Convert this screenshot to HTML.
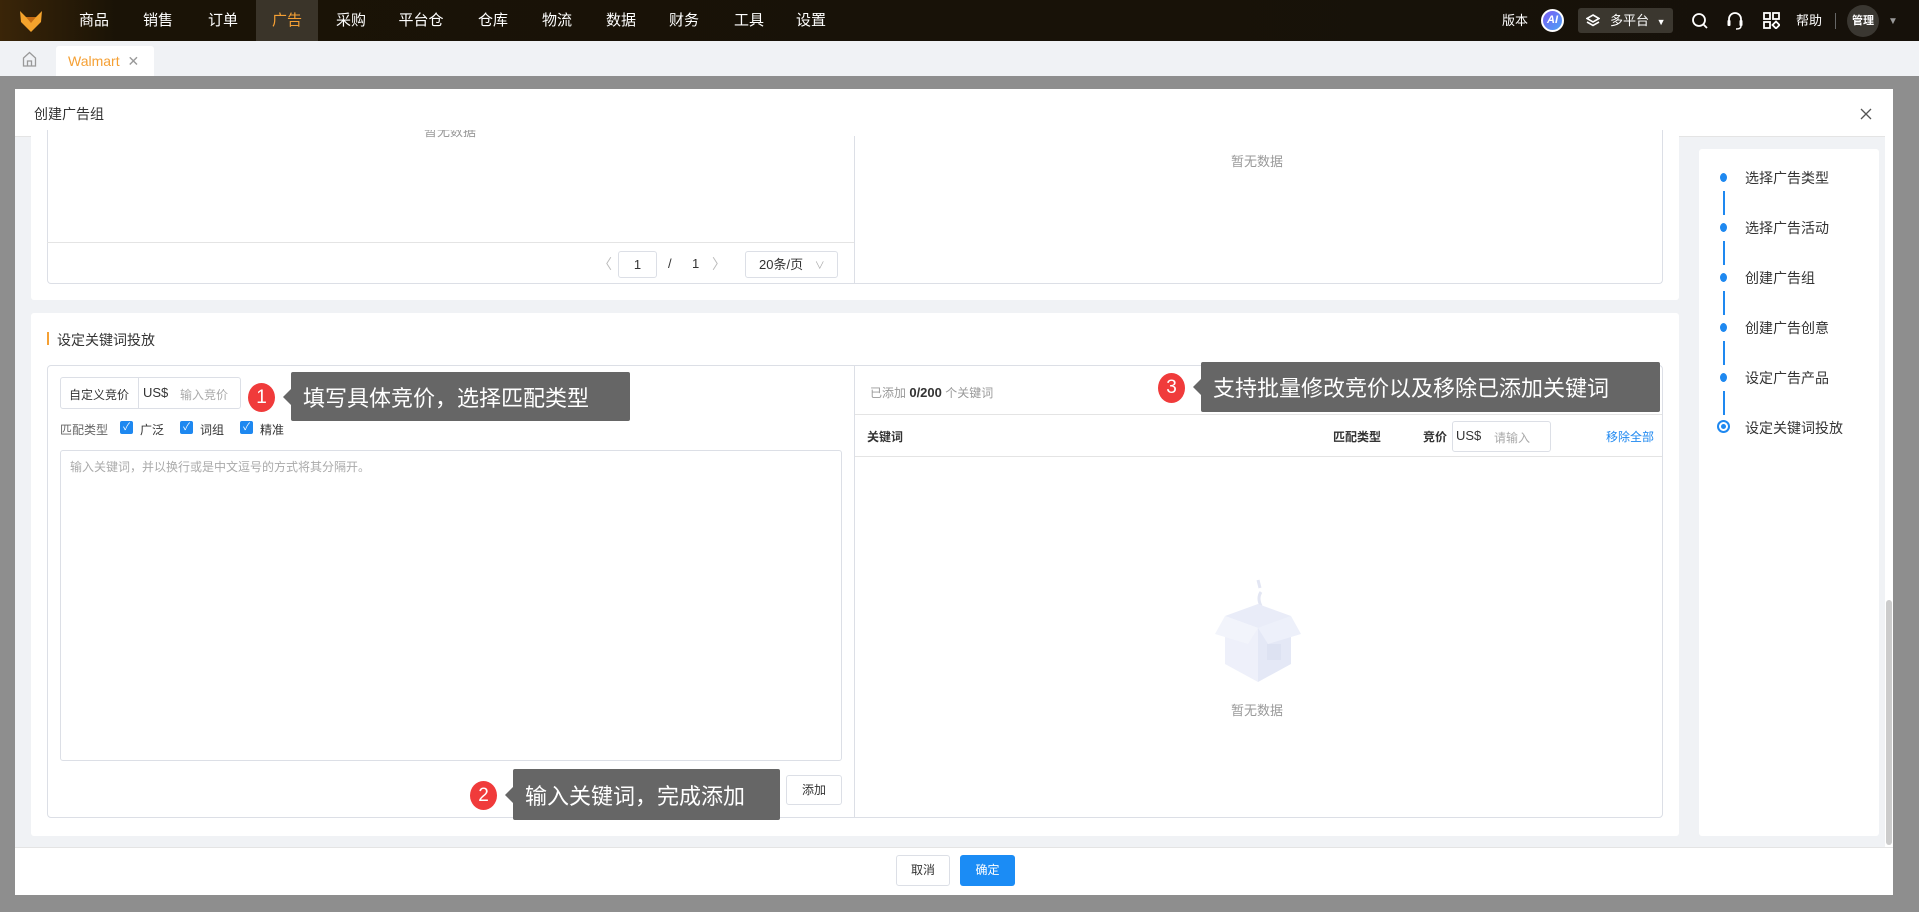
<!DOCTYPE html>
<html><head><meta charset="utf-8"><style>
*{margin:0;padding:0;box-sizing:border-box}
body{width:1919px;height:912px;overflow:hidden;position:relative;font-family:"Liberation Sans","Noto Sans CJK SC",sans-serif;background:#8e8e8e;color:#333}
.a{position:absolute}
.nav{left:0;top:0;width:1919px;height:41px;background:linear-gradient(90deg,#3a2508 0,#1a1306 6%,#16110a 100%)}
.ni{position:absolute;top:0;height:41px;line-height:41px;color:#fff;font-size:15px;transform:translateX(-50%)}
.tabs{left:0;top:41px;width:1919px;height:35px;background:#f0f2f5}
.modal{left:15px;top:89px;width:1878px;height:806px;background:#fff}
.body{left:15px;top:136px;width:1870px;height:711px;background:#f0f2f5;border-top:1px solid #e4e4e4}
.card{background:#fff;border-radius:3px}
.bd{border:1px solid #dcdfe6}
.g{color:#999}
.f13{font-size:13px}
.tip{background:#666;color:#fff;font-size:22px;border-radius:2px;display:flex;align-items:center;padding-left:12px}
.tip:before{content:"";position:absolute;left:-8px;top:50%;margin-top:-8px;border:8px solid transparent;border-left:0;border-right-color:#666}
.num{background:#f03b3b;color:#fff;border-radius:50%;text-align:center;font-size:19px}
.cb{width:13px;height:13px;background:#1e88f0;border-radius:2px;color:#fff;font-size:10px;line-height:13px;text-align:center}
.dot{width:7px;height:9px;border-radius:50%;background:#1e88f0}
.vl{width:2px;height:24px;background:#1e88f0}
.st{font-size:14px;color:#333}
</style></head><body>
<div class="a nav">
<svg class="a" style="left:19px;top:9px" width="24" height="24" viewBox="0 0 24 24"><path d="M1 2 L7 8 L17 8 L23 2 L22 13 L12 23 L2 13Z" fill="#f4a32c"/><path d="M7 8 L12 14 L17 8" fill="#c56b12"/></svg>
<div class="a" style="left:256px;top:0;width:62px;height:41px;background:#3a3429"></div>
<div class="ni" style="left:94px">商品</div><div class="ni" style="left:158px">销售</div><div class="ni" style="left:223px">订单</div><div class="ni" style="left:287px;color:#f5a034">广告</div><div class="ni" style="left:351px">采购</div><div class="ni" style="left:421px">平台仓</div><div class="ni" style="left:493px">仓库</div><div class="ni" style="left:557px">物流</div><div class="ni" style="left:621px">数据</div><div class="ni" style="left:684px">财务</div><div class="ni" style="left:749px">工具</div><div class="ni" style="left:811px">设置</div>
<div class="ni" style="left:1515px;font-size:13px">版本</div>
<div class="a" style="left:1541px;top:9px;width:23px;height:23px;border-radius:50%;background:linear-gradient(135deg,#7b5cf5,#4aa3f5);border:2px solid #fff;color:#fff;font-size:11px;font-weight:bold;text-align:center;line-height:19px;font-style:italic">AI</div>
<div class="a" style="left:1578px;top:8px;width:95px;height:25px;background:#3b372f;border-radius:3px;color:#fff;font-size:13px;line-height:25px;padding-left:32px">多平台 <span style="font-size:9px;margin-left:4px">▼</span></div>
<svg class="a" style="left:1586px;top:14px" width="14" height="13" viewBox="0 0 14 13"><path d="M7 1 L13 4.5 L7 8 L1 4.5Z M1 8 L7 11.5 L13 8" fill="none" stroke="#fff" stroke-width="1.6"/></svg>
<svg class="a" style="left:1691px;top:12px" width="18" height="18" viewBox="0 0 18 18"><circle cx="8" cy="8" r="6" fill="none" stroke="#fff" stroke-width="1.8"/><path d="M12.5 12.5 L16 16" stroke="#fff" stroke-width="1.8"/></svg>
<svg class="a" style="left:1726px;top:11px" width="18" height="20" viewBox="0 0 18 20"><path d="M3 11 V8 a6 6 0 0 1 12 0 V11" fill="none" stroke="#fff" stroke-width="1.8"/><rect x="1.5" y="9" width="3" height="6" rx="1" fill="#fff"/><rect x="13.5" y="9" width="3" height="6" rx="1" fill="#fff"/><path d="M15 15 q0 3 -5 3" fill="none" stroke="#fff" stroke-width="1.5"/></svg>
<svg class="a" style="left:1763px;top:12px" width="17" height="17" viewBox="0 0 17 17" fill="none" stroke="#fff" stroke-width="1.8"><rect x="1" y="1" width="6" height="6"/><rect x="10" y="1" width="6" height="6"/><rect x="1" y="10" width="6" height="6"/><path d="M13 9.5 L16.5 13 L13 16.5 L9.5 13Z"/></svg>
<div class="ni" style="left:1809px;font-size:13px">帮助</div>
<div class="a" style="left:1835px;top:13px;width:1px;height:16px;background:#666"></div>
<div class="a" style="left:1847px;top:5px;width:32px;height:32px;border-radius:50%;background:#3a3731;color:#fff;font-size:11px;line-height:32px;text-align:center;font-weight:bold">管理</div>
<div class="a" style="left:1888px;top:16px;color:#999;font-size:10px">▼</div>
</div>
<div class="a tabs">
<svg class="a" style="left:22px;top:10px" width="15" height="16" viewBox="0 0 15 16"><path d="M1.5 7 L7.5 1.5 L13.5 7 V15 H1.5Z M5.5 15 V10 H9.5 V15" fill="none" stroke="#999" stroke-width="1.3"/></svg>
<div class="a" style="left:56px;top:5px;width:98px;height:30px;background:#fff;border-radius:3px 3px 0 0"></div>
<div class="a" style="left:68px;top:12px;font-size:14px;color:#f5a034">Walmart <span style="color:#999;margin-left:4px">✕</span></div>
</div>
<div class="a modal"></div>
<div class="a" style="left:34px;top:104px;font-size:14px;color:#333">创建广告组</div>
<svg class="a" style="left:1860px;top:108px" width="12" height="12" viewBox="0 0 12 12"><path d="M1 1 L11 11 M11 1 L1 11" stroke="#555" stroke-width="1.3"/></svg>
<div class="a body"></div>
<!-- top card -->
<div class="a card" style="left:31px;top:136px;width:1648px;height:164px;border-radius:0 0 3px 3px"></div>
<div class="a bd" style="left:47px;top:130px;width:1616px;height:154px;border-top:0;border-radius:0 0 4px 4px"></div>
<div class="a" style="left:854px;top:136px;width:1px;height:148px;background:#dcdfe6"></div>
<div class="a" style="left:47px;top:242px;width:807px;height:1px;background:#e4e4e4"></div>
<div class="a g f13" style="left:424px;top:130px;height:12px;overflow:hidden;line-height:4px">暂无数据</div>
<div class="a g f13" style="left:1231px;top:151px">暂无数据</div>
<div class="a" style="left:598px;top:254px;color:#bbb;font-size:14px">〈</div>
<div class="a bd" style="left:618px;top:251px;width:39px;height:27px;border-radius:3px;font-size:13px;text-align:center;line-height:25px">1</div>
<div class="a f13" style="left:668px;top:256px">/</div>
<div class="a f13" style="left:692px;top:256px">1</div>
<div class="a" style="left:712px;top:254px;color:#bbb;font-size:14px">〉</div>
<div class="a bd" style="left:745px;top:251px;width:93px;height:27px;border-radius:3px;font-size:13px;line-height:25px;padding-left:13px">20条/页 <span style="color:#aaa;font-size:10px;margin-left:8px">∨</span></div>
<!-- steps -->
<div class="a card" style="left:1699px;top:149px;width:180px;height:687px"></div>
<div class="a dot" style="left:1720px;top:173px"></div><div class="a st" style="left:1745px;top:168px">选择广告类型</div>
<div class="a vl" style="left:1723px;top:191px"></div>
<div class="a dot" style="left:1720px;top:223px"></div><div class="a st" style="left:1745px;top:218px">选择广告活动</div>
<div class="a vl" style="left:1723px;top:241px"></div>
<div class="a dot" style="left:1720px;top:273px"></div><div class="a st" style="left:1745px;top:268px">创建广告组</div>
<div class="a vl" style="left:1723px;top:291px"></div>
<div class="a dot" style="left:1720px;top:323px"></div><div class="a st" style="left:1745px;top:318px">创建广告创意</div>
<div class="a vl" style="left:1723px;top:341px"></div>
<div class="a dot" style="left:1720px;top:373px"></div><div class="a st" style="left:1745px;top:368px">设定广告产品</div>
<div class="a vl" style="left:1723px;top:391px"></div>
<div class="a" style="left:1717px;top:420px;width:13px;height:13px;border-radius:50%;border:2px solid #1e88f0;background:#fff"><div style="margin:2px;width:5px;height:5px;border-radius:50%;background:#1e88f0"></div></div>
<div class="a st" style="left:1745px;top:418px">设定关键词投放</div>
<!-- second card -->
<div class="a card" style="left:31px;top:313px;width:1648px;height:523px"></div>
<div class="a" style="left:47px;top:332px;width:2px;height:13px;background:#f5a034"></div>
<div class="a" style="left:57px;top:330px;font-size:14px;color:#333">设定关键词投放</div>
<div class="a bd" style="left:47px;top:365px;width:1616px;height:453px;border-radius:4px"></div>
<div class="a" style="left:854px;top:365px;width:1px;height:453px;background:#dcdfe6"></div>
<div class="a bd" style="left:60px;top:377px;width:181px;height:32px;border-radius:3px"></div>
<div class="a" style="left:138px;top:377px;width:1px;height:32px;background:#dcdfe6"></div>
<div class="a" style="left:69px;top:386px;font-size:12px">自定义竞价</div>
<div class="a" style="left:143px;top:385px;font-size:13px">US$</div>
<div class="a" style="left:180px;top:386px;font-size:12px;color:#aaa">输入竞价</div>
<div class="a" style="left:60px;top:421px;font-size:12px;color:#666">匹配类型</div>
<div class="a cb" style="left:120px;top:421px">✓</div><div class="a" style="left:140px;top:421px;font-size:12px">广泛</div>
<div class="a cb" style="left:180px;top:421px">✓</div><div class="a" style="left:200px;top:421px;font-size:12px">词组</div>
<div class="a cb" style="left:240px;top:421px">✓</div><div class="a" style="left:260px;top:421px;font-size:12px">精准</div>
<div class="a bd" style="left:60px;top:450px;width:782px;height:311px;border-radius:3px"></div>
<div class="a" style="left:70px;top:458px;font-size:12px;color:#aaa">输入关键词，并以换行或是中文逗号的方式将其分隔开。</div>
<div class="a bd" style="left:786px;top:775px;width:56px;height:30px;border-radius:3px;font-size:12px;text-align:center;line-height:28px">添加</div>
<div class="a" style="left:870px;top:384px;font-size:12px;color:#999">已添加 <b style="color:#333;font-size:13px">0/200</b> 个关键词</div>
<div class="a" style="left:855px;top:414px;width:807px;height:1px;background:#e4e4e4"></div>
<div class="a" style="left:867px;top:428px;font-size:12px;font-weight:bold">关键词</div>
<div class="a" style="left:1333px;top:428px;font-size:12px;font-weight:bold">匹配类型</div>
<div class="a" style="left:1423px;top:428px;font-size:12px;font-weight:bold">竞价</div>
<div class="a bd" style="left:1452px;top:421px;width:99px;height:31px;border-radius:3px"></div>
<div class="a" style="left:1456px;top:428px;font-size:13px">US$</div>
<div class="a" style="left:1494px;top:429px;font-size:12px;color:#aaa">请输入</div>
<div class="a" style="left:1606px;top:428px;font-size:12px;color:#1e88f0">移除全部</div>
<div class="a" style="left:855px;top:456px;width:807px;height:1px;background:#e4e4e4"></div>
<svg class="a" style="left:1203px;top:578px" width="110" height="108" viewBox="0 0 110 108"><path d="M55 2 l2 8 M58 14 q-4 6 0 14" stroke="#e3e6f3" stroke-width="3" fill="none"/><path d="M22 38 L55 26 L88 38 L55 50Z" fill="#e9ecf8"/><path d="M22 38 L55 50 L55 104 L22 86Z" fill="#eef0fa"/><path d="M88 38 L55 50 L55 104 L88 86Z" fill="#e4e8f6"/><path d="M22 38 L12 56 L45 66 L55 50Z" fill="#f2f4fb"/><path d="M88 38 L98 56 L65 66 L55 50Z" fill="#edf0fa"/><rect x="64" y="66" width="14" height="16" fill="#dde2f2"/></svg>
<div class="a g f13" style="left:1231px;top:700px">暂无数据</div>
<!-- tips -->
<div class="a num" style="left:248px;top:383px;width:27px;height:29px;line-height:29px">1</div>
<div class="a tip" style="left:291px;top:372px;width:339px;height:49px">填写具体竞价，选择匹配类型</div>
<div class="a num" style="left:470px;top:781px;width:27px;height:29px;line-height:29px">2</div>
<div class="a tip" style="left:513px;top:769px;width:267px;height:51px">输入关键词，完成添加</div>
<div class="a num" style="left:1158px;top:373px;width:27px;height:30px;line-height:30px">3</div>
<div class="a tip" style="left:1201px;top:362px;width:459px;height:50px">支持批量修改竞价以及移除已添加关键词</div>
<!-- scrollbar -->
<div class="a" style="left:1886px;top:600px;width:6px;height:245px;background:#ccc;border-radius:3px"></div>
<!-- footer -->
<div class="a" style="left:15px;top:847px;width:1878px;height:1px;background:#e4e4e4"></div>
<div class="a bd" style="left:896px;top:855px;width:54px;height:31px;border-radius:3px;font-size:12px;text-align:center;line-height:29px">取消</div>
<div class="a" style="left:960px;top:855px;width:55px;height:31px;border-radius:3px;font-size:12px;text-align:center;line-height:31px;background:#1b8cf5;color:#fff">确定</div>
</body></html>
